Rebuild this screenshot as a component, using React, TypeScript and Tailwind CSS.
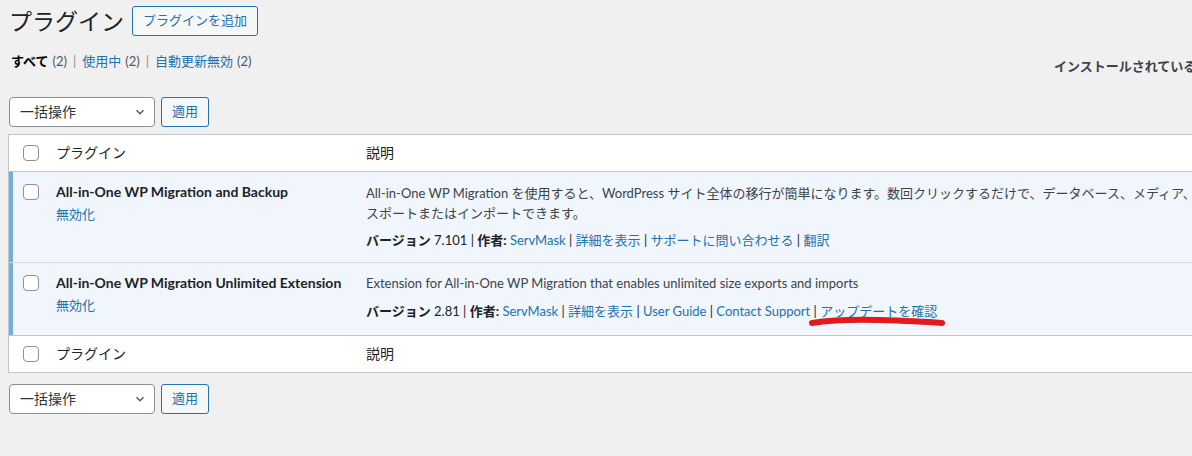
import React from 'react';

const font = { fontFamily: 'Lato, "Noto Sans CJK JP", sans-serif' };

const Checkbox = () => (
    <span className="block w-4 h-4 rounded-[4px] border border-[#8c8f94] bg-white" />
);

const Sep = () => <span className="text-[#1d2327]">|</span>;

const Link = ({ children }: { children: React.ReactNode }) => (
    <span className="text-[#2271b1]">{children}</span>
);

const BulkActions = () => (
    <div className="flex items-center gap-[6px]">
        <div className="w-[146px] h-[30px] rounded-[4px] border border-[#8c8f94] bg-white flex items-center justify-between pl-[10px] pr-[8px] text-[14px] text-[#2c3338]">
            <span>一括操作</span>
            <svg width="14" height="14" viewBox="0 0 20 20" className="mr-[-1px]">
                <path d="M5 7.5 L10 12.5 L15 7.5" fill="none" stroke="#50575e" strokeWidth="2" />
            </svg>
        </div>
        <div className="h-[30px] px-[10px] rounded-[3px] border border-[#2271b1] bg-[#f6f7f7] text-[#2271b1] text-[13px] flex items-center">
            適用
        </div>
    </div>
);

const HeaderRow = ({ top }: { top?: boolean }) => (
    <div className={`flex h-[37px] items-center bg-white ${top ? 'border-b' : 'border-t'} border-[#c3c4c7]`}>
        <div className="w-[38px] pl-[14px] shrink-0">
            <Checkbox />
        </div>
        <div className="w-[319px] pl-[9px] shrink-0 text-[14px] text-[#1d2327]">プラグイン</div>
        <div className="text-[14px] text-[#1d2327]">説明</div>
    </div>
);

const Count = () => <span className="text-[#50575e] ml-[4px]">(2)</span>;
const Bar = () => <span className="text-[#8c8f94] mx-[6px]">|</span>;

export default function App() {
    return (
        <div className="w-[1192px] h-[456px] overflow-hidden bg-[#f0f0f1] text-[#1d2327]" style={font}>
            <div className="w-[1400px] pl-[8px]">
                <div className="flex items-center gap-[8px] pt-[6px] pl-[1px]">
                    <h1 className="text-[23px] leading-[29px] text-[#1d2327]">プラグイン</h1>
                    <div className="h-[30px] px-[10px] rounded-[3px] border border-[#2271b1] bg-[#f6f7f7] text-[#2271b1] text-[13px] flex items-center">
                        プラグインを追加
                    </div>
                </div>

                <div className="flex items-start mt-[15px]">
                    <div className="text-[13px] leading-[20px] pl-[3px] w-[1046px]">
                        <span className="font-bold text-black">すべて</span>
                        <Count />
                        <Bar />
                        <Link>使用中</Link>
                        <Count />
                        <Bar />
                        <Link>自動更新無効</Link>
                        <Count />
                    </div>
                    <div className="mt-[6px] text-[13px] font-semibold text-[#3c434a] whitespace-nowrap">
                        インストールされているプラグインを検索
                    </div>
                </div>

                <div className="mt-[20px] pl-[1px]">
                    <BulkActions />
                </div>

                <div className="mt-[7px] border border-[#c3c4c7] border-r-0 bg-white">
                    <HeaderRow top />

                    <div className="flex bg-[#f0f6fc] h-[91px] border-b border-[#dcdcde]">
                        <div className="w-[38px] shrink-0 border-l-4 border-[#72aee6] pl-[10px] pt-[12px]">
                            <Checkbox />
                        </div>
                        <div className="w-[319px] pl-[9px] shrink-0 pt-[10px]">
                            <div className="text-[14px] font-bold leading-[20px]">All-in-One WP Migration and Backup</div>
                            <div className="text-[13px] leading-[20px] mt-[2px]">
                                <Link>無効化</Link>
                            </div>
                        </div>
                        <div className="pt-[11px] text-[13px] leading-[20px] text-[#3c434a]">
                            <div className="whitespace-nowrap">
                                All-in-One WP Migration を使用すると、WordPress サイト全体の移行が簡単になります。数回クリックするだけで、データベース、メディア、テーマ、プラグインをエク
                            </div>
                            <div>スポートまたはインポートできます。</div>
                            <div className="mt-[7px] text-[#1d2327]">
                                <span className="font-bold">バージョン</span> 7.101 <Sep />{' '}
                                <span className="font-bold">作者:</span> <Link>ServMask</Link> <Sep />{' '}
                                <Link>詳細を表示</Link> <Sep /> <Link>サポートに問い合わせる</Link> <Sep />{' '}
                                <Link>翻訳</Link>
                            </div>
                        </div>
                    </div>

                    <div className="flex bg-[#f0f6fc] h-[72px]">
                        <div className="w-[38px] shrink-0 border-l-4 border-[#72aee6] pl-[10px] pt-[12px]">
                            <Checkbox />
                        </div>
                        <div className="w-[319px] pl-[9px] shrink-0 pt-[10px]">
                            <div className="text-[14px] font-bold leading-[20px] whitespace-nowrap">
                                All-in-One WP Migration Unlimited Extension
                            </div>
                            <div className="text-[13px] leading-[20px] mt-[2px]">
                                <Link>無効化</Link>
                            </div>
                        </div>
                        <div className="pt-[10px] text-[13px] leading-[20px] text-[#3c434a]">
                            <div>Extension for All-in-One WP Migration that enables unlimited size exports and imports</div>
                            <div className="mt-[8px] text-[#1d2327]">
                                <span className="font-bold">バージョン</span> 2.81 <Sep />{' '}
                                <span className="font-bold">作者:</span> <Link>ServMask</Link> <Sep />{' '}
                                <Link>詳細を表示</Link> <Sep /> <Link>User Guide</Link> <Sep />{' '}
                                <Link>Contact Support</Link> <Sep />{' '}
                                <span className="relative">
                                    <Link>アップデートを確認</Link>
                                    <svg
                                        width="140"
                                        height="14"
                                        viewBox="0 0 140 14"
                                        className="absolute left-[-12px] top-[12px]"
                                    >
                                        <path
                                            d="M4 8 Q 30 4 70 5 T 134 8"
                                            fill="none"
                                            stroke="#e3191f"
                                            strokeWidth="6"
                                            strokeLinecap="round"
                                        />
                                    </svg>
                                </span>
                            </div>
                        </div>
                    </div>

                    <HeaderRow />
                </div>

                <div className="mt-[11px] pl-[1px]">
                    <BulkActions />
                </div>
            </div>
        </div>
    );
}
